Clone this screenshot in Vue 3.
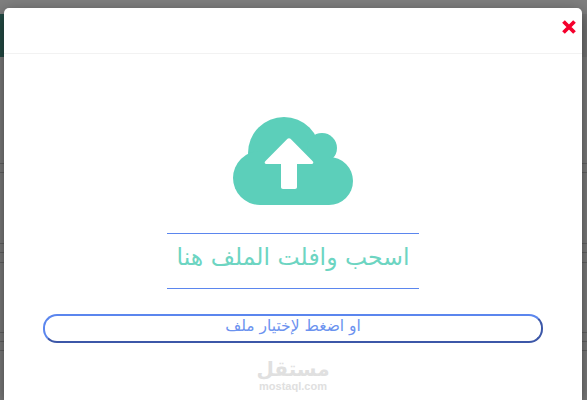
<template>
  <div class="page">
    <!-- the page behind the dimmed backdrop -->
    <div class="page-top"></div>
    <div class="page-nav"><div class="page-brand"></div></div>
    <div class="page-row" v-for="h in rowHeights" :key="h.id" :style="{ height: h.value + 'px' }"></div>

    <div class="backdrop">
      <div class="modal">
        <div class="modal-header">
          <button class="close-btn" aria-label="close">
            <svg width="16" height="16" viewBox="0 0 16 16">
              <path d="M2.5 2.5 L13.5 13.5 M13.5 2.5 L2.5 13.5" stroke="#f5002d" stroke-width="3.8" fill="none" />
            </svg>
          </button>
        </div>

        <div class="modal-body" dir="rtl">
          <svg class="cloud" width="120" height="88" viewBox="0 0 120 88">
            <circle cx="51" cy="36" r="36" fill="#5ccfba" />
            <circle cx="89" cy="31" r="15" fill="#5ccfba" />
            <circle cx="27" cy="61" r="27" fill="#5ccfba" />
            <circle cx="96" cy="64" r="24" fill="#5ccfba" />
            <rect x="27" y="36" width="69" height="52" fill="#5ccfba" />
            <path
              fill="#fff"
              d="M54.5 21.8 C55.3 21 56.7 21 57.5 21.8 L79.5 44 C81 45.5 80.4 47 78.5 47 L64 47 L64 70 C64 71.3 63.3 72 62 72 L50 72 C48.7 72 48 71.3 48 70 L48 47 L33.5 47 C31.6 47 31 45.5 32.5 44 Z"
            />
          </svg>

          <div class="drop-text">اسحب وافلت الملف هنا</div>

          <button class="pick-btn">او اضغط لإختيار ملف</button>

          <div class="watermark">
            <span class="wm-ar">مستقل</span>
            <span class="wm-en">mostaql.com</span>
          </div>
        </div>
      </div>
    </div>
  </div>
</template>

<script setup>
const rowHeights = [
  { id: 1, value: 107 },
  { id: 2, value: 9 },
  { id: 3, value: 71 },
  { id: 4, value: 9 },
  { id: 5, value: 10 },
  { id: 6, value: 70 },
  { id: 7, value: 9 },
  { id: 8, value: 9 }
];
</script>

<style>
html,
body {
  margin: 0;
  background: #6c6c6c;
}
</style>

<style scoped>
.page {
  position: relative;
  width: 587px;
  height: 400px;
  overflow: hidden;
  background: #fff;
}

.page-top {
  height: 14px;
  background: #fff;
}

.page-nav {
  height: 43px;
  background: #eee;
}

.page-brand {
  width: 40px;
  height: 100%;
  background: #4a9c8e;
}

.page-row {
  box-sizing: border-box;
  border-bottom: 1px solid #ccc;
}

.backdrop {
  position: absolute;
  inset: 0;
  padding: 8px 5px 0 4px;
  background: rgba(0, 0, 0, 0.5);
}

.modal {
  height: 392px;
  background: #fff;
  border-radius: 5px 5px 0 0;
  box-shadow: 0 5px 15px rgba(0, 0, 0, 0.5);
  font-family: "DejaVu Sans", sans-serif;
}

.modal-header {
  box-sizing: border-box;
  height: 46px;
  padding: 11px 5px 0 0;
  display: flex;
  justify-content: flex-end;
  align-items: flex-start;
  border-bottom: 1px solid #f2f2f2;
}

.close-btn {
  padding: 0;
  width: 16px;
  height: 16px;
  border: none;
  background: none;
  cursor: pointer;
}

.modal-body {
  display: flex;
  flex-direction: column;
  align-items: center;
  padding-top: 63px;
}

.cloud {
  display: block;
}

.drop-text {
  box-sizing: border-box;
  width: 252px;
  height: 56px;
  margin-top: 28px;
  border-top: 1px solid #5b86ee;
  border-bottom: 1px solid #5b86ee;
  text-align: center;
  line-height: 47px;
  font-size: 23.5px;
  color: #6dd5c2;
}

.pick-btn {
  box-sizing: border-box;
  width: 500px;
  height: 29px;
  margin-top: 25px;
  padding: 0 0 5px;
  border-width: 2px;
  border-style: solid;
  border-color: #5b86ee #3c57a8 #3c57a8 #5b86ee;
  border-radius: 14px;
  background: #fff;
  font-family: "DejaVu Sans", sans-serif;
  font-size: 15.5px;
  line-height: 18px;
  color: #6c93ef;
}

.watermark {
  display: flex;
  flex-direction: column;
  align-items: center;
  margin-top: 14px;
  color: #e0e0e0;
  font-family: "DejaVu Sans", sans-serif;
  font-weight: bold;
}

.wm-ar {
  font-size: 20px;
  line-height: 24px;
}

.wm-en {
  font-family: "Liberation Sans", sans-serif;
  font-size: 11px;
  line-height: 11px;
  direction: ltr;
}
</style>
